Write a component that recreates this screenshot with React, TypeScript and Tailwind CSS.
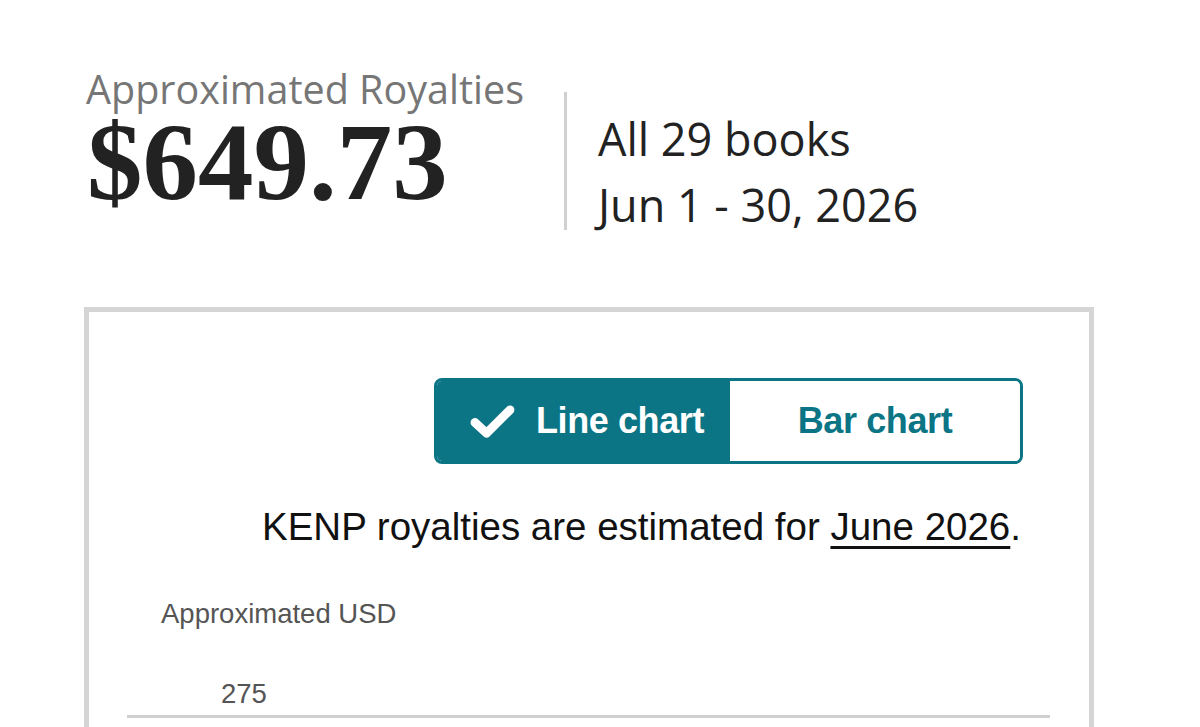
const SANS = "font-['Open_Sans',sans-serif]"
const NARROW = "font-['Liberation_Sans_Narrow','Liberation_Sans',sans-serif]"

function CheckMark() {
  return (
    <svg viewBox="0 0 48 40" className="w-[47px] h-[39px]" fill="none">
      <polyline points="6,21 18,32 42,8" stroke="white" strokeWidth="9" strokeLinecap="round" strokeLinejoin="round" />
    </svg>
  )
}

export default function App() {
  return (
    <main className="h-[727px] bg-white overflow-hidden">
      {/* Summary header */}
      <section className="flex items-start pl-[86px] pt-[66px]">
        <div className="flex flex-col">
          <span className={`${SANS} text-[39.5px] leading-[46px] text-[#767676]`}>Approximated Royalties</span>
          <span className="font-['Liberation_Serif',serif] font-bold text-[111px] leading-[100px] text-[#222] ml-[1px]">
            $649.73
          </span>
        </div>
        <div className="ml-[40px] mt-[26px] w-[3px] h-[138px] bg-[#d0d0d0]" />
        <div className={`${SANS} ml-[31px] mt-[40px] flex flex-col text-[45px] leading-[66px] text-[#222]`}>
          <span>All 29 books</span>
          <span>Jun 1 - 30, 2026</span>
        </div>
      </section>

      {/* Chart card */}
      <section className="ml-[84px] mt-[69px] w-[1010px] h-[520px] border-[5px] border-b-0 border-[#d5d5d5] pt-[66px]">
        <div className="flex justify-end pr-[66px]">
          <div className={`${NARROW} flex h-[86px] w-[589px] rounded-[8px] overflow-hidden border-[3px] border-[#0b7585] font-bold text-[36px] tracking-[-0.4px]`}>
            <button className="flex items-center justify-center gap-[20px] w-[293px] pl-[6px] bg-[#0b7585] text-white">
              <CheckMark />
              <span>Line chart</span>
            </button>
            <button className="flex-1 flex items-center justify-center bg-white text-[#0b7585]">Bar chart</button>
          </div>
        </div>
        <p className={`${NARROW} mt-[38px] pr-[68px] text-right text-[38.5px] leading-[50px] text-[#111]`}>
          KENP royalties are estimated for{' '}
          <span className="underline underline-offset-[6px] decoration-[3px]">June 2026</span>.
        </p>
        <div className={`${NARROW} ml-[72px] mt-[44px] text-[27.5px] leading-[36px] text-[#555]`}>Approximated USD</div>
        <div className="ml-[38px] mr-[39px] mt-[46px] border-b-[3px] border-[#cfcfcf] pb-[5px]">
          <span className={`${NARROW} ml-[94px] text-[27.5px] leading-[32px] text-[#555]`}>275</span>
        </div>
      </section>
    </main>
  )
}
